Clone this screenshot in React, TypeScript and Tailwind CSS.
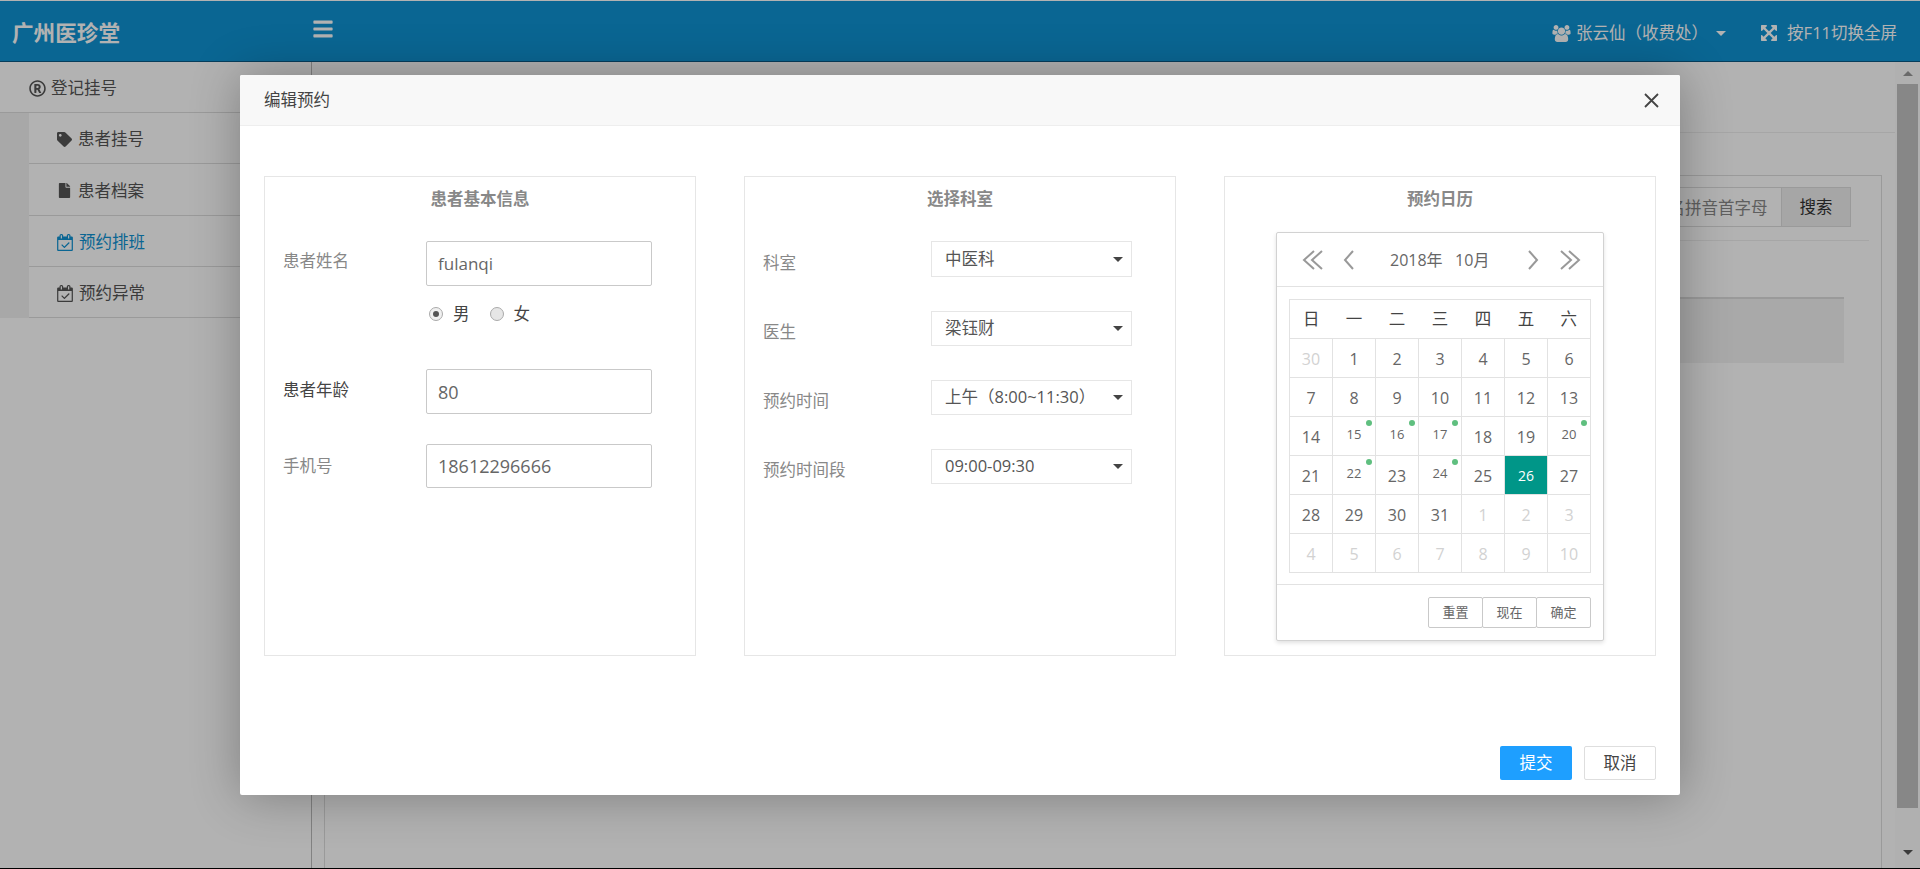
import { FaBars, FaFile, FaRegRegistered, FaTag } from "react-icons/fa";

const font = "font-['Open_Sans','Noto_Sans_CJK_SC',sans-serif]";

const CalendarCheck = ({ className }: { className?: string }) => (
  <svg className={className} width="16" height="17" viewBox="0 0 1664 1792" fill="currentColor">
    <path d="M1303 964l-512 512q-10 9-23 9t-23-9l-288-288q-9-10-9-23t9-22l46-46q9-9 22-9t23 9l220 220 444-444q10-9 23-9t22 9l46 46q9 9 9 22t-9 23zm-1175 700h1408v-1024h-1408v1024zm384-1216v-288q0-14-9-23t-23-9h-64q-14 0-23 9t-9 23v288q0 14 9 23t23 9h64q14 0 23-9t9-23zm768 0v-288q0-14-9-23t-23-9h-64q-14 0-23 9t-9 23v288q0 14 9 23t23 9h64q14 0 23-9t9-23zm384-64v1280q0 52-38 90t-90 38h-1408q-52 0-90-38t-38-90v-1280q0-52 38-90t90-38h128v-96q0-66 47-113t113-47h64q66 0 113 47t47 113v96h384v-96q0-66 47-113t113-47h64q66 0 113 47t47 113v96h128q52 0 90 38t38 90z" />
  </svg>
);

const Users = () => (
  <svg width="19" height="17" viewBox="0 0 1920 1792" fill="currentColor">
    <path d="M593 896q-162 5-265 128h-134q-82 0-138-40.500t-56-118.500q0-353 124-353 6 0 43.500 21t97.500 42.500 119 21.500q67 0 133-23-5 37-5 66 0 139 81 256zm1071 637q0 120-73 189.500t-194 69.500h-874q-121 0-194-69.500t-73-189.500q0-53 3.500-103.500t14-109 26.500-108.500 43-97.500 62-81 85.500-53.500 111.500-20q10 0 43 21.500t73 48 107 48 135 21.500 135-21.500 107-48 73-48 43-21.500q61 0 111.500 20t85.500 53.500 62 81 43 97.500 26.500 108.500 14 109 3.500 103.500zm-1024-1277q0 106-75 181t-181 75-181-75-75-181 75-181 181-75 181 75 75 181zm704 384q0 159-112.500 271.500t-271.500 112.500-271.500-112.500-112.500-271.500 112.500-271.500 271.500-112.500 271.500 112.500 112.500 271.500zm576 225q0 78-56 118.500t-138 40.500h-134q-103-123-265-128 81-117 81-256 0-29-5-66 66 23 133 23 59 0 119-21.500t97.500-42.500 43.500-21q124 0 124 353zm-128-609q0 106-75 181t-181 75-181-75-75-181 75-181 181-75 181 75 75 181z" />
  </svg>
);

const ArrowsAlt = () => (
  <svg width="16" height="16" viewBox="128 128 1536 1536" fill="currentColor">
    <path d="M1411 541l-355 355 355 355 144-144q29-31 70-14 39 17 39 59v448q0 26-19 45t-45 19h-448q-42 0-59-40-17-39 14-69l144-144-355-355-355 355 144 144q31 30 14 69-17 40-59 40h-448q-26 0-45-19t-19-45v-448q0-42 40-59 39-17 69 14l144 144 355-355-355-355-144 144q-19 19-45 19-12 0-24-5-40-17-40-59v-448q0-26 19-45t45-19h448q42 0 59 40 17 39-14 69l-144 144 355 355 355-355-144-144q-31-30-14-69 17-40 59-40h448q26 0 45 19t19 45v448q0 42-39 59-13 5-25 5-26 0-45-19z" />
  </svg>
);

const subMenu = [
  { title: "患者挂号", icon: <FaTag className="mr-[6px] text-[15px]" /> },
  { title: "患者档案", icon: <FaFile className="mr-[6px] text-[15px]" /> },
  { title: "预约排班", icon: <CalendarCheck className="mr-[6px]" />, active: true },
  { title: "预约异常", icon: <CalendarCheck className="mr-[6px]" /> },
];

const selects = [
  { label: "科室", value: "中医科", cls: "mt-0 h-[36px]", lab: "pt-[10px]" },
  { label: "医生", value: "梁钰财", cls: "mt-[34px] h-[35px]", lab: "pt-[9px]" },
  { label: "预约时间", value: "上午（8:00~11:30）", cls: "mt-[34px] h-[35px]", lab: "pt-[9px]" },
  { label: "预约时间段", value: "09:00-09:30", cls: "mt-[34px] h-[35px]", lab: "pt-[9px]" },
];

const weeks = ["日", "一", "二", "三", "四", "五", "六"];

type Day = { d: number; off?: boolean; mark?: boolean; on?: boolean };

const days: Day[][] = [
  [{ d: 30, off: true }, { d: 1 }, { d: 2 }, { d: 3 }, { d: 4 }, { d: 5 }, { d: 6 }],
  [{ d: 7 }, { d: 8 }, { d: 9 }, { d: 10 }, { d: 11 }, { d: 12 }, { d: 13 }],
  [{ d: 14 }, { d: 15, mark: true }, { d: 16, mark: true }, { d: 17, mark: true }, { d: 18 }, { d: 19 }, { d: 20, mark: true }],
  [{ d: 21 }, { d: 22, mark: true }, { d: 23 }, { d: 24, mark: true }, { d: 25 }, { d: 26, on: true }, { d: 27 }],
  [{ d: 28 }, { d: 29 }, { d: 30 }, { d: 31 }, { d: 1, off: true }, { d: 2, off: true }, { d: 3, off: true }],
  [{ d: 4, off: true }, { d: 5, off: true }, { d: 6, off: true }, { d: 7, off: true }, { d: 8, off: true }, { d: 9, off: true }, { d: 10, off: true }],
];

const Caret = ({ cls }: { cls: string }) => (
  <span className={`h-0 w-0 border-x-[5px] border-t-[5px] border-x-transparent ${cls}`} />
);

const Chevron = ({ dir, double }: { dir: "l" | "r"; double?: boolean }) => (
  <svg width={double ? 22 : 12} height="20" viewBox={double ? "0 0 22 20" : "0 0 12 20"} fill="none" stroke="#999" strokeWidth="2">
    {dir === "l" ? (
      <>
        <path d={double ? "M12 1 2 10l10 9" : "M10 1 2 10l8 9"} />
        {double && <path d="M20 1 10 10l10 9" />}
      </>
    ) : (
      <>
        <path d={double ? "M2 1l10 9-10 9" : "M2 1l8 9-8 9"} />
        {double && <path d="M10 1l10 9-10 9" />}
      </>
    )}
  </svg>
);

const Calendar = () => (
  <div className="mt-[10px] flex h-[409px] w-[328px] flex-col rounded-[2px] border border-[#d2d2d2] bg-white shadow-[0_2px_4px_rgba(0,0,0,0.12)]">
    <div className="flex h-[54px] items-center border-b border-[#e2e2e2] pl-[25px] text-[16px] text-[#666]">
      <Chevron dir="l" double />
      <span className="ml-[19px]">
        <Chevron dir="l" />
      </span>
      <span className="ml-[35px] w-[137px] pt-px whitespace-pre">2018年{"   "}10月</span>
      <Chevron dir="r" />
      <span className="ml-[20px]">
        <Chevron dir="r" double />
      </span>
    </div>
    <div className="pt-[12px] pl-[12px]">
      <table className="w-[302px] table-fixed border-collapse border border-[#e2e2e2] text-center">
        <thead>
          <tr className="h-[39px] text-[16.5px] font-normal text-[#444]">
            {weeks.map((w) => (
              <th key={w} className="pt-px font-normal">
                {w}
              </th>
            ))}
          </tr>
        </thead>
        <tbody>
          {days.map((row, i) => (
            <tr key={i} className="h-[39px]">
              {row.map((c, j) => (
                <td
                  key={j}
                  className={`relative border border-[#e2e2e2] p-0 ${
                    c.on
                      ? "bg-[#009688] text-[14px] font-medium text-white"
                      : c.mark
                        ? "pb-[3px] text-[13px] text-[#666]"
                        : c.off
                          ? "pt-[2px] text-[16px] text-[#d2d2d2]"
                          : "pt-[2px] text-[16px] text-[#666]"
                  }`}
                >
                  {c.d}
                  {c.mark && <span className="absolute top-[3px] right-[3px] h-[6px] w-[6px] rounded-full bg-[#5fbf7f]" />}
                </td>
              ))}
            </tr>
          ))}
        </tbody>
      </table>
    </div>
    <div className="mt-[11px] flex flex-1 items-start justify-end border-t border-[#e2e2e2] pt-[12px] pr-[12px]">
      {["重置", "现在", "确定"].map((b, i) => (
        <div
          key={b}
          className={`flex h-[31px] w-[55px] items-center justify-center rounded-[2px] border border-[#c9c9c9] text-[13px] text-[#666] ${i > 0 ? "ml-[-1px]" : ""}`}
        >
          {b}
        </div>
      ))}
    </div>
  </div>
);

const Field = ({ value, cls }: { value: string; cls: string }) => (
  <input
    readOnly
    value={value}
    className={`ml-[143px] w-[226px] rounded-[2px] border border-[#c9c9c9] bg-white px-[11px] text-[#666] outline-none ${cls}`}
  />
);

const Modal = () => (
  <div className="absolute top-[75px] left-[240px] flex h-[720px] w-[1440px] flex-col rounded-[2px] bg-white shadow-[1px_1px_50px_rgba(0,0,0,0.3)]">
    <div className="flex h-[51px] shrink-0 items-center justify-between rounded-t-[2px] border-b border-[#eee] bg-[#f8f8f8] pr-[21px] pl-[24px] text-[16.5px] text-[#444]">
      <span>编辑预约</span>
      <svg width="15" height="15" viewBox="0 0 15 15" stroke="#444" strokeWidth="1.8">
        <path d="M1 1l13 13M14 1 1 14" />
      </svg>
    </div>
    <div className="flex gap-[48px] px-[24px] pt-[50px]">
      <div className="h-[480px] w-[432px] border border-[#e6e6e6]">
        <div className="h-[64px] pt-[10px] text-center text-[16.5px] font-bold text-[#888]">患者基本信息</div>
        <div className="relative pl-[18px]">
          <div className="flex items-start">
            <span className="w-0 whitespace-nowrap pt-[8px] text-[16.5px] text-[#888]">患者姓名</span>
            <Field value="fulanqi" cls="h-[45px] text-[17px]" />
          </div>
          <div className="mt-[18px] ml-[146px] flex h-[20px] items-center text-[16.5px] text-[#444]">
            <span className="flex h-[14px] w-[14px] items-center justify-center rounded-full border border-[#aaa] bg-[#f0f0f0]">
              <span className="h-[6px] w-[6px] rounded-full bg-[#555]" />
            </span>
            <span className="ml-[10px]">男</span>
            <span className="ml-[20px] h-[14px] w-[14px] rounded-full border border-[#aaa] bg-[#e6e6e6]" />
            <span className="ml-[10px]">女</span>
          </div>
          <div className="mt-[45px] flex items-start">
            <span className="w-0 whitespace-nowrap pt-[9px] text-[16.5px] text-[#444]">患者年龄</span>
            <Field value="80" cls="h-[45px] text-[18px]" />
          </div>
          <div className="mt-[30px] flex items-start">
            <span className="w-0 whitespace-nowrap pt-[10px] text-[16.5px] text-[#888]">手机号</span>
            <Field value="18612296666" cls="h-[44px] text-[18px]" />
          </div>
        </div>
      </div>
      <div className="h-[480px] w-[432px] border border-[#e6e6e6]">
        <div className="h-[64px] pt-[10px] text-center text-[16.5px] font-bold text-[#888]">选择科室</div>
        {selects.map((s) => (
          <div key={s.label} className={`flex pl-[18px] ${s.cls}`}>
            <span className={`w-[168px] text-[16.5px] text-[#888] ${s.lab}`}>{s.label}</span>
            <div className="flex w-[201px] items-center justify-between border border-[#e6e6e6] pr-[8px] pl-[13px] text-[16.5px] text-[#555]">
              <span>{s.value}</span>
              <Caret cls="border-t-[#444]" />
            </div>
          </div>
        ))}
      </div>
      <div className="flex h-[480px] w-[432px] flex-col items-center border border-[#e6e6e6]">
        <div className="h-[45px] pt-[10px] text-[16.5px] font-bold text-[#888]">预约日历</div>
        <Calendar />
      </div>
    </div>
    <div className="mt-auto flex justify-end gap-[12px] pr-[24px] pb-[15px] text-[16.5px]">
      <div className="flex h-[34px] w-[72px] items-center justify-center rounded-[2px] bg-[#1e9fff] text-white">提交</div>
      <div className="flex h-[34px] w-[72px] items-center justify-center rounded-[2px] border border-[#dedede] text-[#444]">取消</div>
    </div>
  </div>
);

const App = () => {
  return (
    <div className={`relative flex h-[869px] w-[1920px] flex-col overflow-hidden bg-white pt-px ${font}`}>
      <header className="flex h-[61px] shrink-0 items-center border-b border-[#0b5a85] bg-[#0f92d3] text-white">
        <div className="w-[312px] pt-[4px] pl-[12px] text-[21.6px] font-bold">广州医珍堂</div>
        <FaBars className="mb-[4px] text-[22px]" />
        <div className="ml-auto flex items-center pt-[4px] pr-[23px] text-[16.5px]">
          <Users />
          <span className="ml-[5px]">张云仙（收费处）</span>
          <Caret cls="ml-[8px] border-t-white" />
          <span className="ml-[35px]">
            <ArrowsAlt />
          </span>
          <span className="ml-[10px]">按F11切换全屏</span>
        </div>
      </header>
      <main className="flex min-h-0 flex-1">
        <aside className="w-[312px] shrink-0 border-r border-[#bbb] bg-white">
          <div className="flex h-[51px] items-center border-b border-[#ddd] pt-[3px] pl-[29px] text-[16.5px] text-[#555]">
            <FaRegRegistered className="mr-[5px] text-[17px]" />
            登记挂号
          </div>
          <div className="bg-[#f1f1f1] pl-[29px]">
            {subMenu.map((m) => (
              <div
                key={m.title}
                className={`flex h-[51.25px] items-center border-b border-[#ddd] bg-white pt-[3px] pl-[28px] text-[16.5px] ${m.active ? "text-[#0f92d3]" : "text-[#555]"}`}
              >
                {m.icon}
                {m.title}
              </div>
            ))}
          </div>
        </aside>
        <div className="flex min-w-0 flex-1 flex-col pl-[12px]">
          <div className="h-[71px] shrink-0 border-b border-[#eee]" />
          <div className="mt-[42px] mr-[13px] flex-1 border-x border-t border-[#ddd] pt-[11px] pl-[11px]">
            <div className="flex justify-end pr-[30px]">
              <input
                readOnly
                placeholder="姓名拼音首字母"
                className="h-[40px] w-[151px] border border-[#ddd] pr-0 pl-[20px] text-[16.5px] outline-none placeholder:text-[#888]"
              />
              <div className="flex h-[40px] w-[69px] items-center justify-center border border-l-0 border-[#ddd] bg-[#eee] text-[16.5px] text-[#333]">
                搜索
              </div>
            </div>
            <div className="mt-[13px] mr-[12px] border-t border-[#eee]" />
            <div className="mt-[56px] mr-[37px] h-[66px] border-t-2 border-[#ddd] bg-[#f2f2f2]" />
          </div>
        </div>
        <div className="flex w-[25px] shrink-0 flex-col items-center bg-[#fdfdfd]">
          <Caret cls="mt-[9px] rotate-180 border-t-[#999]" />
          <div className="mt-[8px] h-[724px] w-[21px] bg-[#c2c2c2]" />
          <Caret cls="mt-[42px] border-t-[#555]" />
        </div>
      </main>
      <div className="h-px shrink-0 bg-black" />
      <div className="absolute inset-0 bg-black/30" />
      <Modal />
    </div>
  );
};

export default App;
